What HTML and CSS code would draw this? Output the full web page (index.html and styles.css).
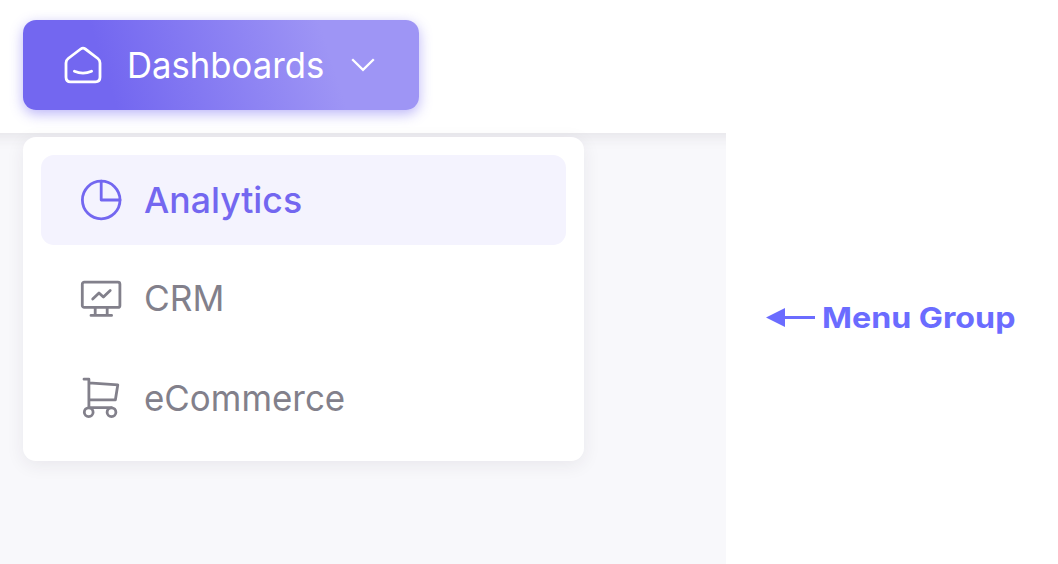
FILE: index.html
```html
<!DOCTYPE html>
<html lang="en">
<head>
<meta charset="utf-8">
<title>Menu Group</title>
<link rel="stylesheet" href="styles.css">
</head>
<body>
<main class="page">
  <section class="preview">
    <header class="navbar">
      <a class="nav-toggle">
        <svg class="home-icon" width="40" height="40" viewBox="0 0 40 40"><path d="M3 18Q3 15.2 5.2 13.5L17.7 4Q20 2.3 22.3 4L34.8 13.5Q37 15.2 37 18V32.3Q37 36.8 32.5 36.8H7.5Q3 36.8 3 32.3ZM11.4 26.3Q20 29.9 28.6 26.3"/></svg>
        <span class="nav-label">Dashboards</span>
        <svg class="chevron" width="24" height="16" viewBox="0 0 24 16"><path d="M1.2 2.3 12 12.9 22.8 2.3"/></svg>
      </a>
    </header>
    <div class="content">
      <nav class="menu">
        <a class="item active">
          <svg class="icon" width="42" height="42" viewBox="0 0 42 42"><circle cx="21.2" cy="21" r="18.8"/><path d="M21.2 2.2V21H40"/></svg>
          <span class="label analytics">Analytics</span>
        </a>
        <a class="item">
          <svg class="icon" width="42" height="42" viewBox="0 0 42 42"><rect x="2.3" y="4.2" width="37.6" height="25.2" rx="2"/><path d="M12.7 21 19 14.9l4.4 4.2 6.8-6.6M15.2 29.4v8M27.2 29.4v8M11 37.4H31.6"/></svg>
          <span class="label crm">CRM</span>
        </a>
        <a class="item">
          <svg class="icon" width="42" height="42" viewBox="0 0 42 42"><circle cx="8.7" cy="35.2" r="4.4"/><circle cx="31.5" cy="35.2" r="4.4"/><path d="M4 2.2H8.9V30.7H31.5M8.9 5.8 37.8 7.8 35.4 22.8H8.9"/></svg>
          <span class="label ecommerce">eCommerce</span>
        </a>
      </nav>
    </div>
  </section>
  <aside class="callout">
    <svg class="arrow" width="49" height="20" viewBox="0 0 49 20"><path d="M0 9.5 19 0V19ZM18 8H49V11H18Z"/></svg>
    <span class="callout-label">Menu Group</span>
  </aside>
</main>
</body>
</html>
```
FILE: styles.css
```css
* { box-sizing: border-box; }
body { margin: 0; font-family: Inter, "Liberation Sans", sans-serif; background: #fff; }
.page { display: flex; width: 1058px; height: 564px; overflow: hidden; }
.preview { width: 726px; height: 564px; background: #f8f8fb; overflow: hidden; }
.navbar { width: 766px; height: 133px; margin-left: -20px; padding: 20px 43px; background: #fff; box-shadow: 0 3px 14px rgba(47, 43, 61, .1); }
.nav-toggle {
  display: flex; align-items: center; width: 396px; height: 90px; padding-left: 40px;
  border-radius: 13px; color: #fff;
  background: linear-gradient(72.47deg, #7367f0 22.16%, #9e95f5 76.47%);
  box-shadow: 0 4px 13px rgba(115, 103, 240, .48);
}
.home-icon { fill: none; stroke: #fff; stroke-width: 2.8; stroke-linecap: round; stroke-linejoin: round; }
.nav-label { width: 220px; margin-left: 24px; font-size: 36px; line-height: 44px; white-space: nowrap; transform: scaleX(.964); transform-origin: left; }
.chevron { margin-left: 4px; fill: none; stroke: #fff; stroke-width: 2.3; }
.content { position: relative; padding: 4px 23px; }
.menu {
  display: flex; flex-direction: column; gap: 9px; width: 561px; height: 324px; padding: 18px;
  border-radius: 13px; background: #fff; box-shadow: 0 4px 18px rgba(47, 43, 61, .08);
}
.item { display: flex; align-items: center; flex: none; height: 90px; padding-left: 39px; gap: 22px; border-radius: 13px; color: #82808b; }
.active { background: #f4f3fe; color: #7367f0; }
.icon { fill: none; stroke: currentColor; stroke-width: 2.8; stroke-linecap: round; stroke-linejoin: round; }
.label { font-size: 36px; line-height: 44px; white-space: nowrap; transform-origin: left; }
.analytics { font-weight: 500; transform: scaleX(.99); }
.crm { padding-bottom: 2px; transform: scaleX(.98); }
.ecommerce { transform: scaleX(.97); }
.callout { display: flex; align-items: center; padding: 72px 0 0 40px; gap: 7px; color: #6b6cff; }
.arrow { fill: currentColor; }
.callout-label { font-size: 29px; font-weight: 700; line-height: 36px; white-space: nowrap; transform: scaleX(1.11); transform-origin: left; }
```
